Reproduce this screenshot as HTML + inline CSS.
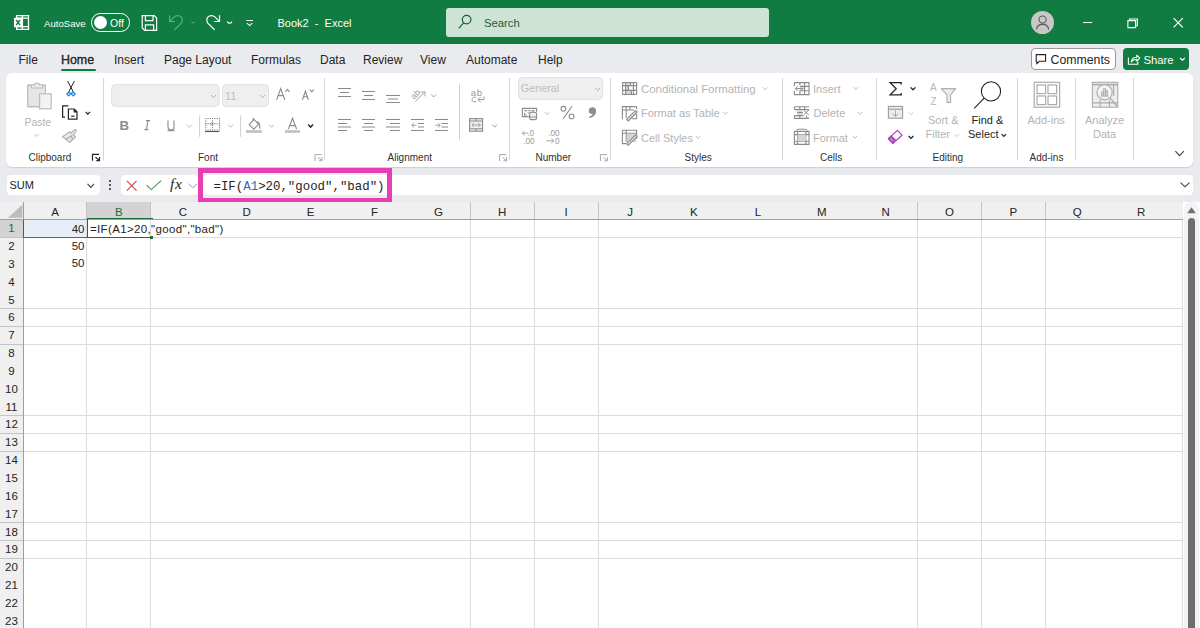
<!DOCTYPE html>
<html><head><meta charset="utf-8">
<style>
*{box-sizing:border-box;margin:0;padding:0}
html,body{width:1200px;height:628px;overflow:hidden;background:#fff;font-family:"Liberation Sans",sans-serif;color:#242424}
.a{position:absolute;white-space:pre}
svg{position:absolute;overflow:visible}
#title{position:absolute;left:0;top:0;width:1200px;height:44.5px;background:#107C41}
#tabs{position:absolute;left:0;top:44px;width:1200px;height:158px;background:#E9EBEE}
#rib{position:absolute;left:6px;top:73px;width:1187px;height:94px;background:#fff;border-radius:6px;box-shadow:0 1px 1px rgba(0,0,0,.12)}
.tab{position:absolute;top:53px;font-size:12px;line-height:14px;color:#242424}
.gl{position:absolute;font-size:10px;line-height:12px;color:#303030;top:152px}
.sep{position:absolute;top:78px;width:1px;height:82px;background:#D6D6D6}
.dis{color:#B3B3B3}
.hdr{font-size:11.5px;line-height:14px}
.cell{position:absolute;font-size:11.5px;line-height:14px;color:#242424}
.rt{position:absolute;font-size:11px;line-height:13px;margin-top:0.8px}
</style></head><body>
<div id="title"></div>
<div id="tabs"></div>

<!-- title bar content -->
<div class="a" style="left:44px;top:18px;font-size:9.6px;line-height:12px;color:#fff">AutoSave</div>
<div class="a" style="left:91px;top:13.2px;width:39px;height:18.6px;border:1.1px solid #fff;border-radius:9.3px"></div>
<div class="a" style="left:93.5px;top:16.3px;width:13px;height:13px;background:#fff;border-radius:50%"></div>
<div class="a" style="left:110px;top:17px;font-size:10.5px;line-height:12px;color:#fff">Off</div>
<div class="a" style="left:277.5px;top:17px;font-size:11px;line-height:13px;color:#fff">Book2  -  Excel</div>
<div class="a" style="left:446px;top:8px;width:323px;height:28.5px;background:#CDE3D6;border-radius:3px"></div>
<div class="a" style="left:484px;top:15.5px;font-size:11.3px;line-height:14px;color:#1B5E38">Search</div>
<div class="a" style="left:1031px;top:11px;width:23px;height:23px;background:#C8C8C8;border-radius:50%"></div>

<!-- tabs -->
<div class="tab" style="left:18.5px">File</div>
<div class="tab" style="left:61px;font-size:12.4px;-webkit-text-stroke:0.35px #242424">Home</div>
<div class="a" style="left:61px;top:68.5px;width:34.5px;height:2px;background:#107C41;border-radius:1px"></div>
<div class="tab" style="left:114px">Insert</div>
<div class="tab" style="left:164px">Page Layout</div>
<div class="tab" style="left:251px">Formulas</div>
<div class="tab" style="left:320px">Data</div>
<div class="tab" style="left:363px">Review</div>
<div class="tab" style="left:420px">View</div>
<div class="tab" style="left:466px">Automate</div>
<div class="tab" style="left:538px">Help</div>
<div class="a" style="left:1031px;top:48px;width:85px;height:22px;background:#fff;border:1px solid #9A9A9A;border-radius:4px"></div>
<div class="tab" style="left:1050.5px;font-size:12.3px">Comments</div>
<div class="a" style="left:1123px;top:48px;width:66px;height:22px;background:#107C41;border-radius:4px"></div>
<div class="tab" style="left:1143.5px;color:#fff;font-size:11.3px">Share</div>

<div id="rib"></div>
<!-- ribbon separators -->
<div class="sep" style="left:103px"></div>
<div class="sep" style="left:324px"></div>
<div class="sep" style="left:509px"></div>
<div class="sep" style="left:610px"></div>
<div class="sep" style="left:782px"></div>
<div class="sep" style="left:876px"></div>
<div class="sep" style="left:1017px"></div>
<div class="sep" style="left:1075px"></div>
<div class="sep" style="left:1133px"></div>
<!-- group labels -->
<div class="gl" style="left:28.5px">Clipboard</div>
<div class="gl" style="left:198px">Font</div>
<div class="gl" style="left:387.5px">Alignment</div>
<div class="gl" style="left:535.5px">Number</div>
<div class="gl" style="left:684.5px">Styles</div>
<div class="gl" style="left:820px">Cells</div>
<div class="gl" style="left:932.5px">Editing</div>
<div class="gl" style="left:1029.5px">Add-ins</div>



<!-- ribbon text -->
<div class="rt dis" style="left:24.5px;top:115px;font-size:10.4px">Paste</div>
<div class="rt dis" style="left:641px;top:82px;font-size:11.4px">Conditional Formatting</div>
<div class="rt dis" style="left:641px;top:106.5px">Format as Table</div>
<div class="rt dis" style="left:641px;top:131px">Cell Styles</div>
<div class="rt dis" style="left:813px;top:82px">Insert</div>
<div class="rt dis" style="left:813.5px;top:106.5px">Delete</div>
<div class="rt dis" style="left:813px;top:131px">Format</div>
<div class="rt dis" style="left:928px;top:113px">Sort &amp;</div>
<div class="rt dis" style="left:925.5px;top:127.5px">Filter</div>
<div class="rt" style="left:971.5px;top:113px">Find &amp;</div>
<div class="rt" style="left:968px;top:127.5px">Select</div>
<div class="rt dis" style="left:1027.5px;top:113px">Add-ins</div>
<div class="rt dis" style="left:1085px;top:113px">Analyze</div>
<div class="rt dis" style="left:1093px;top:127.5px">Data</div>
<svg style="left:0;top:0" width="1200" height="628" fill="none" stroke-linecap="butt">
<!-- ===== title bar icons ===== -->
<g stroke="#fff" stroke-width="1.2">
  <!-- excel icon -->
  <path d="M16.6 15.6 H28.5 V29.3 H16.6 Z M16.6 18.2 H28.5 M16.6 26.6 H28.5 M22.4 15.6 V29.3" stroke-width="1.3"/>
  <rect x="14" y="17.8" width="8.6" height="9.4" fill="#fff" stroke="none"/>
  <path d="M16.2 20 L20 25.2 M20 20 L16.2 25.2" stroke="#107C41" stroke-width="1.4"/>
  <!-- save -->
  <path d="M142.2 15.6 H154.2 L156.6 18 V30.4 H144.6 L142.2 28 Z"/>
  <path d="M145.4 15.6 V20.6 H153 V15.6 M145.4 30.4 V24.8 H153.6 V30.4"/>
  <!-- redo -->
  <path d="M219.5 15.2 V21.5 H214.2" />
  <path d="M218.8 20.8 L215.2 17.2 C213 15 209.6 15 207.8 17.2 C206.4 18.8 206.6 21.8 208 23.4 L214.6 29.8" />
  <path d="M227.2 21.6 C228.6 23.8 230.6 23.8 232 21.6" stroke-width="1.1"/>
  <!-- customize -->
  <path d="M246.3 20.5 H252.9 M246.9 23.2 L249.6 25.6 L252.3 23.2" stroke-width="1.1"/>
  <!-- window controls -->
  <path d="M1083.2 22.5 H1092.2" stroke-width="1.1"/>
  <path d="M1127.9 20.6 H1135.6 V27.6 H1127.9 Z M1129.6 20.6 V19 H1137.4 V25.8 H1135.6" stroke-width="1.1"/>
  <path d="M1173.6 18.2 L1182.8 27.4 M1182.8 18.2 L1173.6 27.4" stroke-width="1.2"/>
</g>
<g stroke="#5BAF7D" stroke-width="1.2">
  <!-- undo dim -->
  <path d="M169.6 15.2 V21.5 H174.9"/>
  <path d="M170.3 20.8 L173.9 17.2 C176.1 15 179.5 15 181.3 17.2 C182.7 18.8 182.5 21.8 181.1 23.4 L174.5 29.8"/>
  <path d="M191.2 21.8 C192.2 23.4 193.8 23.4 194.8 21.8" stroke-width="1"/>
</g>
<!-- search icon -->
<g stroke="#1B5E38" stroke-width="1.2">
  <circle cx="466.6" cy="19.6" r="4.3"/>
  <path d="M463.6 22.8 L458.8 28.4"/>
</g>
<!-- avatar person -->
<g stroke="#595959" stroke-width="1.1">
  <circle cx="1042.6" cy="19.6" r="3.6"/>
  <path d="M1036.6 29.6 C1036.8 25.6 1039 24.4 1042.6 24.4 C1046.2 24.4 1048.4 25.6 1048.6 29.6"/>
</g>
<!-- comments icon -->
<path d="M1036.2 54.6 H1045.6 V61.2 H1039.4 L1036.8 63.8 V61.2 H1036.2 Z" stroke="#242424" stroke-width="1.1" stroke-linejoin="round"/>
<!-- share icon -->
<g stroke="#fff" stroke-width="1.1">
  <path d="M1128.4 57.4 V64.2 H1137.8 V61.4"/>
  <path d="M1131.2 62 C1131.6 58.8 1133.8 57.2 1136.8 57.2 V55.2 L1139.8 58.2 L1136.8 61.2 V59.4 C1135 59.4 1132.8 60 1131.2 62 Z" stroke-linejoin="round"/>
  <path d="M1180 58 L1182.4 60.2 L1184.8 58"/>
</g>

<!-- ===== Clipboard ===== -->
<g stroke="#BDBDBD" stroke-width="1.2">
  <path d="M31 85.4 H27.8 V106.6 H39.2" fill="#E8E8E8"/>
  <path d="M27.8 85.4 H31 M42.8 85.4 H45.4 V93.3" />
  <rect x="27.8" y="85.4" width="17.6" height="21.2" fill="#E6E6E6" stroke="none"/>
  <path d="M45.4 93.3 V85.4 H42.4 M31.2 85.4 H27.8 V106.6 H39.2"/>
  <path d="M31.4 88 V84.8 H34.4 C34.6 82.6 39.4 82.6 39.6 84.8 H42.6 V88 Z" fill="#ECECEC"/>
  <rect x="39.6" y="93.8" width="11.6" height="15" fill="#F2F2F2"/>
</g>
<path d="M34.6 134.2 L36.8 136.4 L39 134.2" stroke="#BDBDBD" stroke-width="1"/>
<!-- scissors -->
<g stroke="#242424" stroke-width="1">
  <path d="M67.6 81 L72.8 91 M74.4 81 L69.2 91"/>
</g>
<g stroke="#2B88D8" stroke-width="1.2">
  <path d="M69 91.4 L66.8 94 L68.6 96 L70.8 94 Z" fill="#BFE0F5"/>
  <path d="M73 91.4 L75.2 94 L73.4 96 L71.2 94 Z" fill="#BFE0F5"/>
</g>
<!-- copy -->
<g stroke="#242424" stroke-width="1.2">
  <path d="M68.4 105.8 H62.6 V117.2 H65"/>
  <path d="M68.4 109 V119.2 H77 V111.8 L74.2 109 Z M74.2 109 V111.8 H77"/>
  <path d="M71.2 116.2 H74.6"/>
  <path d="M85.6 111.9 L87.8 114.1 L90 111.9" stroke-width="1.3"/>
</g>
<!-- format painter -->
<g stroke="#A8A8A8" stroke-width="1.1" stroke-linejoin="round">
  <path d="M62.6 136.6 L69.8 131.6 L75.6 136.8 L69.6 142.4 Z" fill="#E8E8E8"/>
  <path d="M65.6 139.6 L71.6 135.8 L72.4 140.2" fill="none"/>
  <path d="M71.2 133 L74.6 129.8 C75.4 129.2 76.6 130.2 76.2 131 L73.6 135" fill="#F2F2F2"/>
</g>

<!-- ===== Font ===== -->
<rect x="111.6" y="84.6" width="107.6" height="21.8" rx="4" fill="#EFEFEF" stroke="#E0E0E0" stroke-width="1"/>
<rect x="222.5" y="84.6" width="46" height="21.8" rx="4" fill="#EFEFEF" stroke="#E0E0E0" stroke-width="1"/>
<g stroke="#B5B5B5" stroke-width="1">
  <path d="M211 95 L213.5 97.6 L216 95"/>
  <path d="M260.2 95 L262.7 97.6 L265.2 95"/>
</g>
<text x="225" y="99.8" font-family="Liberation Sans" font-size="11" fill="#BDBDBD" stroke="none">11</text>
<g stroke="#8A8A8A" stroke-width="1.1">
  <path d="M276.6 99.8 L280.7 88.6 L284.8 99.8 M278.2 95.6 H283.2"/>
  <path d="M285.4 91.8 L287.5 89.4 L289.6 91.8"/>
  <path d="M302.4 99.8 L305.4 91.2 L308.4 99.8 M303.6 96.8 H307.2"/>
  <path d="M309.8 89.6 L311.9 91.8 L314 89.6"/>
</g>
<text x="119.6" y="129.8" font-family="Liberation Sans" font-weight="bold" font-size="13.2" fill="#8C8C8C" stroke="none">B</text>
<g stroke="#8C8C8C" stroke-width="1.1">
  <path d="M146 120.6 H150.2 M144.4 129.6 H148.4 M148 120.6 L146.4 129.6"/>
  <path d="M168 120.4 V127 C168 131 174 131 174 127 V120.4 M167.4 130.8 H174.8"/>
</g>
<g stroke="#BDBDBD" stroke-width="1">
  <path d="M186.8 124.6 L189.4 127.4 L192 124.6"/>
  <path d="M228.2 124.6 L230.6 127.4 L233 124.6"/>
  <path d="M269.2 124.6 L271.6 127.4 L274 124.6"/>
</g>
<path d="M199.6 115.4 V136.8 M240.6 115.4 V136.8" stroke="#D0D0D0" stroke-width="1"/>
<!-- borders -->
<g fill="#7A7A7A" stroke="none"><rect x="205.2" y="118.0" width="1.1" height="1.1"/><rect x="205.2" y="120.3" width="1.1" height="1.1"/><rect x="205.2" y="122.6" width="1.1" height="1.1"/><rect x="205.2" y="124.9" width="1.1" height="1.1"/><rect x="205.2" y="127.2" width="1.1" height="1.1"/><rect x="205.2" y="129.5" width="1.1" height="1.1"/><rect x="207.5" y="118.0" width="1.1" height="1.1"/><rect x="207.5" y="129.5" width="1.1" height="1.1"/><rect x="209.8" y="118.0" width="1.1" height="1.1"/><rect x="209.8" y="129.5" width="1.1" height="1.1"/><rect x="212.1" y="118.0" width="1.1" height="1.1"/><rect x="212.1" y="120.3" width="1.1" height="1.1"/><rect x="212.1" y="122.6" width="1.1" height="1.1"/><rect x="212.1" y="124.9" width="1.1" height="1.1"/><rect x="212.1" y="127.2" width="1.1" height="1.1"/><rect x="212.1" y="129.5" width="1.1" height="1.1"/><rect x="214.4" y="118.0" width="1.1" height="1.1"/><rect x="214.4" y="129.5" width="1.1" height="1.1"/><rect x="216.7" y="118.0" width="1.1" height="1.1"/><rect x="216.7" y="129.5" width="1.1" height="1.1"/><rect x="219.0" y="118.0" width="1.1" height="1.1"/><rect x="219.0" y="120.3" width="1.1" height="1.1"/><rect x="219.0" y="122.6" width="1.1" height="1.1"/><rect x="219.0" y="124.9" width="1.1" height="1.1"/><rect x="219.0" y="127.2" width="1.1" height="1.1"/><rect x="219.0" y="129.5" width="1.1" height="1.1"/><rect x="205.2" y="123.2" width="1.1" height="1.1"/><rect x="207.5" y="123.2" width="1.1" height="1.1"/><rect x="209.8" y="123.2" width="1.1" height="1.1"/><rect x="212.1" y="123.2" width="1.1" height="1.1"/><rect x="214.4" y="123.2" width="1.1" height="1.1"/><rect x="216.7" y="123.2" width="1.1" height="1.1"/><rect x="219.0" y="123.2" width="1.1" height="1.1"/></g>
<path d="M211.8 122.4 L213 123.75 L211.8 125.1 L210.6 123.75 Z" stroke="#7A7A7A" stroke-width="0.8"/>
<path d="M205 131.5 H219.2" stroke="#5A5A5A" stroke-width="1.2"/>
<!-- fill color -->
<g stroke="#8A8A8A" stroke-width="1.1" stroke-linejoin="round">
  <path d="M249.2 124.6 L254 119.4 L258.6 124.2 L253.8 129.2 Z"/>
  <path d="M253.2 120.2 V117.8 M256.6 122.2 C258.6 121.6 260.2 123.4 259.8 128.8"/>
</g>
<rect x="246" y="130.2" width="16" height="2.6" fill="#C0C0C0"/>
<path d="M288.4 129 L292.5 118.2 L296.6 129 M289.8 125.6 H295.2" stroke="#8A8A8A" stroke-width="1.1"/>
<rect x="285" y="130.2" width="15" height="2.6" fill="#C0C0C0"/>
<path d="M308.2 124.6 L310.6 127.2 L313 124.6" stroke="#242424" stroke-width="1.5"/>
<!-- launchers -->
<g stroke="#A8A8A8" stroke-width="1">
<path d="M321.6 154.6 H315.0 V161.0 M318.0 157.4 L322.0 160.6 M322.0 157.2 V160.8 H318.8"/>
<path d="M506.2 154.6 H499.6 V161.0 M502.6 157.4 L506.6 160.6 M506.6 157.2 V160.8 H503.4"/>
<path d="M607.0 154.6 H600.4 V161.0 M603.4 157.4 L607.4 160.6 M607.4 157.2 V160.8 H604.2"/>
</g>
<g stroke="#242424" stroke-width="1.2">
<path d="M99.1 154.4 H92.5 V160.8 M95.5 157.2 L99.5 160.4 M99.5 157.0 V160.6 H96.3"/>
</g>

<!-- ===== Alignment ===== -->
<g stroke="#8A8A8A" stroke-width="1.2">
  <path d="M338 88.5 H351 M340 92.5 H349 M338 96.5 H351"/>
  <path d="M362 91.5 H375 M364 95.5 H373 M362 99.5 H375"/>
  <path d="M386 95.5 H400 M388 99 H398 M386 102.5 H400"/>
  <path d="M338 119.5 H351 M338 123.5 H347 M338 127 H351 M338 130.5 H347"/>
  <path d="M362 119.5 H375 M364 123.5 H373 M362 127 H375 M364 130.5 H373"/>
  <path d="M386 119.5 H400 M390 123.5 H400 M386 127 H400 M390 130.5 H400"/>
  <path d="M411 119.5 H424 M418 123.5 H424 M418 127 H424 M411 130.5 H424"/>
  <path d="M435 119.5 H448 M441.4 123.5 H448 M441.4 127 H448 M435 130.5 H448"/>
</g>
<g stroke="#A0A0A0" stroke-width="1">
  <path d="M416.4 125.3 H411.8 M413.8 123.2 L411.7 125.3 L413.8 127.4"/>
  <path d="M435.2 125.3 H440.2 M438.2 123.2 L440.3 125.3 L438.2 127.4"/>
</g>
<g stroke="#A0A0A0" stroke-width="1">
  <path d="M415.4 101.4 L425 91.8 M420.6 92 H425 V96.4"/>
  <path d="M431.2 94.4 L433.6 97 L436 94.4"/>
  <path d="M492.4 124.6 L494.7 127.2 L497 124.6"/>
</g>
<text transform="translate(414,100) rotate(-45)" font-family="Liberation Sans" font-size="9" fill="#A0A0A0" stroke="none">ab</text>
<path d="M459.5 84.4 V139.6" stroke="#D0D0D0" stroke-width="1"/>
<text x="470.8" y="95.6" font-family="Liberation Sans" font-size="9.6" fill="#9A9A9A" stroke="none" textLength="11.4">ab</text>
<g stroke="#9A9A9A" stroke-width="1">
  <path d="M476.4 97.8 C475 96.8 472.2 97 472 99.6 C471.8 101.8 474.8 102.4 476.4 101.4"/>
  <path d="M480.6 97 L478 99.6 L480.6 102.2 M484 96.4 V99.6 H478.4"/>
</g>
<g stroke="#8C8C8C" stroke-width="1.1">
  <rect x="469.6" y="118.6" width="13" height="12.6" fill="#EDEDED"/>
  <path d="M469.6 121 H482.6 M469.6 128.8 H482.6 M476.1 118.6 V121 M476.1 128.8 V131.2"/>
  <path d="M472 125 H480.4 M473.8 123.2 L472 125 L473.8 126.8 M478.6 123.2 L480.4 125 L478.6 126.8" stroke="#A0A0A0" stroke-width="1"/>
</g>

<!-- ===== Number ===== -->
<rect x="518.6" y="77.6" width="84" height="21.8" rx="4" fill="#EFEFEF" stroke="#E0E0E0" stroke-width="1"/>
<text x="520.8" y="92" font-family="Liberation Sans" font-size="10.8" fill="#BDBDBD" stroke="none">General</text>
<path d="M595.4 88 L597.7 90.4 L600 88" stroke="#B5B5B5" stroke-width="1"/>
<g stroke="#8C8C8C" stroke-width="1.1">
  <path d="M528.8 116.6 H522.4 V108.4 H536.6 V112"/>
  <path d="M524.4 110.6 H527 M528.4 110.6 H530.4 M531.6 110.6 H534.4 M524.6 113 V115 H526.6 M527.6 113 H529"/>
  <path d="M529.6 113.6 C529.6 111.6 536.6 111.6 536.6 113.6 V118.4 C536.6 120 529.6 120 529.6 118.4 Z M529.6 116 C529.6 117.4 536.6 117.4 536.6 116" fill="#F2F2F2"/>
  <path d="M545 112.2 L547.1 114.6 L549.2 112.2" stroke="#BDBDBD" stroke-width="0.9"/>
</g>
<g stroke="#8C8C8C" stroke-width="1.1">
  <circle cx="563.4" cy="108.8" r="2.4"/>
  <circle cx="571.6" cy="116.4" r="2.4"/>
  <path d="M572 106.2 L563.2 118.8"/>
</g>
<path d="M591.6 107.4 C595 107 596.6 109.4 596 112.4 C595.4 115.4 592.6 117.4 589.2 118 L589 117 C591 116.2 592.4 115.2 592.8 113.8 C590.6 114.2 588.8 113 588.8 111 C588.8 108.8 590 107.6 591.6 107.4 Z" fill="#8C8C8C"/>
<g font-family="Liberation Sans" font-size="8.2" fill="#9A9A9A" stroke="none">
  <text x="527.2" y="136">.0</text>
  <text x="523.2" y="143.9">.00</text>
  <text x="548.2" y="136">.00</text>
  <text x="555" y="143.9">0</text>
</g>
<g stroke="#9A9A9A" stroke-width="0.9">
  <path d="M528.2 133.2 H522.2 M524.6 131 L522.2 133.2 L524.6 135.4"/>
  <path d="M546.2 140.8 H553.8 M551.4 138.6 L553.8 140.8 L551.4 143"/>
</g>

<!-- ===== Styles ===== -->
<g stroke="#8A8A8A" stroke-width="1.1">
  <rect x="626" y="82.6" width="4.6" height="2.6" fill="#D8D8D8" stroke="none"/>
  <rect x="626" y="86" width="2.4" height="4" fill="#D8D8D8" stroke="none"/>
  <rect x="626" y="91" width="5.2" height="3.2" fill="#D8D8D8" stroke="none"/>
  <rect x="622.6" y="82.6" width="14" height="11.8"/>
  <path d="M622.6 85.6 H636.6 M622.6 90.4 H636.6 M625.6 82.6 V94.4 M633.4 82.6 V94.4 M630.6 82.6 V85.6 M628.5 85.6 V90.4 M631.4 90.4 V94.4"/>
</g>
<g stroke="#8C8C8C" stroke-width="1.1">
  <path d="M622.4 119.2 V106.6 H636.6 V109 M622.4 110 H634 M626.2 106.6 V118 M630 106.6 V110"/>
  <path d="M636.6 114 V118.8 H632"/>
  <path d="M626.6 119.4 L635.6 110.4 L637.2 112 L628.2 121 Z" fill="#E6E6E6" stroke-linejoin="round"/>
  <path d="M622.4 130.2 V143.6 H626 M622.4 130.2 H636.6 V139 M622.4 133.2 H636.6 M626.2 130.2 V142"/>
  <rect x="626.8" y="133.8" width="9.4" height="8.4" fill="#D4D4D4" stroke="none"/>
  <path d="M626.6 143.8 L635.6 134.8 L637.2 136.4 L628.2 145.4 Z" fill="#E6E6E6" stroke-linejoin="round"/>
</g>
<g stroke="#BDBDBD" stroke-width="1">
  <path d="M763 87.4 L765.2 89.8 L767.4 87.4"/>
  <path d="M723.2 112 L725.4 114.4 L727.6 112"/>
  <path d="M695.8 136 L698 138.4 L700.2 136"/>
</g>

<!-- ===== Cells ===== -->
<g stroke="#8A8A8A" stroke-width="1.1">
  <rect x="800" y="86.4" width="4.6" height="4.4" fill="#D6D6D6" stroke="none"/>
  <path d="M794.4 82.6 H809 V94.6 H794.4 V90.8 M794.4 86.2 V82.6 M799.9 90.8 H809 M799.9 86.4 H809 M799.9 90.8 V94.6 M804.6 82.6 V94.6 M799.9 82.6 V85"/>
  <path d="M803.2 88.6 H795.4 M797.8 86.2 L795.4 88.6 L797.8 91" stroke-width="1"/>
  <path d="M794.4 106.8 H809 M794.4 118.4 H809 M794.4 106.8 V109.6 M794.4 115.6 V118.4 M794.4 109.6 H809 M794.4 115.6 H803.4 M799.8 106.8 V109.6 M799.8 115.6 V118.4 M806.6 115.6 V118.4 M804.6 106.8 V109.6"/>
  <rect x="797" y="110.6" width="5.6" height="4.2" fill="#D6D6D6" stroke="none"/>
  <path d="M797.2 112.6 H803" stroke-width="1"/>
  <path d="M803.8 110.2 L808.8 115 M808.8 110.2 L803.8 115" stroke-width="1"/>
  <path d="M794.4 131.4 H809 V144.4 H794.4 Z M794.4 134.6 H809 M794.4 141.2 H809 M797.6 131.4 V144.4 M805.8 131.4 V144.4"/>
  <rect x="797.6" y="134.6" width="8.2" height="6.6" fill="#D6D6D6" stroke="none"/>
  <path d="M796 130.2 C796 128.8 807.4 128.8 807.4 130.2" stroke-width="1"/>
</g>
<g stroke="#BDBDBD" stroke-width="1">
  <path d="M853.6 87.2 L855.8 89.6 L858 87.2"/>
  <path d="M857.8 112 L860 114.4 L862.2 112"/>
  <path d="M852.8 135.8 L855 138.2 L857.2 135.8"/>
</g>

<!-- ===== Editing ===== -->
<path d="M901.2 84.4 V82.6 H890.2 L896.2 88.8 L890.2 94.8 H901.2 V93" stroke="#242424" stroke-width="1.3"/>
<path d="M910.6 87.4 L913 89.8 L915.4 87.4" stroke="#242424" stroke-width="1.3"/>
<g stroke="#9C9C9C" stroke-width="1.1">
  <rect x="888.4" y="106.4" width="14.2" height="11.8" fill="#EBEBEB"/>
  <path d="M888.4 109.2 H902.6"/>
  <path d="M895.5 110.4 V116.4 M892.6 113.6 L895.5 116.4 L898.4 113.6" stroke="#A0A0A0" stroke-width="0.9"/>
</g>
<path d="M908.8 112.2 L911 114.6 L913.2 112.2" stroke="#C8C8C8" stroke-width="1"/>
<g stroke="#A23EB6" stroke-width="1.2" stroke-linejoin="round">
  <path d="M888.4 138.6 L891.1 136.1 L894.4 139.8 L893 143.4 Z" fill="#C97FD6"/>
  <path d="M888.4 138.6 L897.4 130.4 L902 135.2 L893 143.4 Z"/>
  <path d="M891.1 136.1 L895.7 140.2"/>
</g>
<path d="M908.6 136 L911 138.4 L913.4 136" stroke="#242424" stroke-width="1.3"/>
<!-- sort & filter -->
<g font-family="Liberation Sans" font-size="10" fill="#B5B5B5" stroke="none">
  <text x="930" y="91">A</text>
  <text x="930.6" y="104.8">Z</text>
</g>
<path d="M941.2 88.6 H955.6 L950.6 94.8 V102.4 H947 V94.8 Z" stroke="#B0B0B0" stroke-width="1.1" fill="#EBEBEB" stroke-linejoin="round"/>
<path d="M954.6 134.4 L956.8 136.6 L959 134.4" stroke="#C8C8C8" stroke-width="1"/>
<!-- find -->
<circle cx="991" cy="91.4" r="9.6" stroke="#242424" stroke-width="1.1"/>
<path d="M984.2 98.2 L974.2 108.4" stroke="#242424" stroke-width="1.1"/>
<path d="M1001.6 134.2 L1003.8 136.4 L1006 134.2" stroke="#242424" stroke-width="1.2"/>

<!-- ===== Add-ins ===== -->
<g stroke="#ABABAB" stroke-width="1.2">
  <rect x="1034.2" y="82.3" width="25.4" height="24.9"/>
  <rect x="1037" y="85" width="8.6" height="8.6"/>
  <rect x="1048" y="85" width="8.6" height="8.6"/>
  <rect x="1037" y="96" width="8.6" height="8.6"/>
  <rect x="1048" y="96" width="8.6" height="8.6"/>
</g>
<g stroke="#ABABAB" stroke-width="1.1">
  <rect x="1092.4" y="82.3" width="25.4" height="24.9" fill="#EDEDED"/>
  <path d="M1092.4 84.6 H1117.8" stroke-width="1.6"/>
  <path d="M1092.4 102.9 H1117.8 M1100.2 100 V107.2 M1109.4 100 V107.2 M1113.6 84.6 V96"/>
  <circle cx="1104.6" cy="92.2" r="7.6" fill="#F4F4F4" stroke-width="1.2"/>
  <path d="M1109.8 97.6 L1117.6 106.8" stroke-width="1.4"/>
  <path d="M1101.6 96 V92 H1103.6 V96 M1103.6 96 V88.6 H1105.6 V96 M1105.6 96 V90.6 H1107.6 V96 M1100.6 96.2 H1108.6" stroke-width="0.9" fill="#D8D8D8"/>
</g>
<path d="M1175.4 151.2 L1179.6 155.6 L1183.8 151.2" stroke="#424242" stroke-width="1.2"/>
</svg>

<!-- formula bar -->
<div class="a" style="left:6.5px;top:175px;width:93.5px;height:20px;background:#fff;border-radius:4px"></div>
<div class="a" style="left:9.5px;top:178.5px;font-size:11px;line-height:13px;color:#242424">SUM</div>
<svg style="left:87px;top:182.5px" width="8" height="6"><path d="M0.5 0.8 L3.8 4.4 L7.1 0.8" fill="none" stroke="#424242" stroke-width="1.1"/></svg>
<div class="a" style="left:109px;top:179.6px;width:2px;height:2px;background:#242424;border-radius:1px"></div>
<div class="a" style="left:109px;top:184px;width:2px;height:2px;background:#242424;border-radius:1px"></div>
<div class="a" style="left:109px;top:188.4px;width:2px;height:2px;background:#242424;border-radius:1px"></div>
<div class="a" style="left:120.5px;top:175px;width:77.5px;height:20px;background:#fff;border-radius:4px"></div>
<svg style="left:126px;top:179.5px" width="12" height="12"><path d="M0.8 0.8 L10.6 10.6 M10.6 0.8 L0.8 10.6" stroke="#CC4E4E" stroke-width="1.2" fill="none"/></svg>
<svg style="left:146px;top:180px" width="16" height="11"><path d="M0.6 5.2 L5.2 9.6 L15.2 0.6" stroke="#46975F" stroke-width="1.1" fill="none"/></svg>
<div class="a" style="left:170px;top:175px;font-family:'Liberation Serif',serif;font-style:italic;font-size:15.5px;line-height:17px;color:#242424;letter-spacing:0.6px">fx</div>
<svg style="left:188px;top:183px" width="10" height="6"><path d="M0.5 0.8 L4.8 4.6 L9.1 0.8" fill="none" stroke="#A0A0A0" stroke-width="1"/></svg>
<div class="a" style="left:203px;top:175px;width:989.5px;height:20px;background:#fff;border-radius:4px"></div>
<svg style="left:1179.5px;top:182px" width="10" height="6"><path d="M0.5 0.6 L5 4.8 L9.5 0.6" fill="none" stroke="#424242" stroke-width="1.1"/></svg>
<div class="a" style="left:213.5px;top:180px;font-family:'Liberation Mono',monospace;font-size:12.4px;line-height:14px;color:#242424">=IF(<span style="color:#2A70B8">A1</span>&gt;20,"good","bad")</div>
<div class="a" style="left:198.4px;top:168px;width:193.2px;height:35.4px;border:5.1px solid #E83EB4"></div>

<!-- grid -->
<div class="a" style="left:0;top:202px;width:1183px;height:18px;background:#F0F0F0"></div>
<div class="a" style="left:0;top:219px;width:23.5px;height:409px;background:#F0F0F0"></div>
<div class="a" style="left:86.99px;top:202px;width:63.89px;height:18px;background:#D3D3D3"></div>
<div class="a" style="left:0;top:219.20px;width:23.5px;height:17.85px;background:#D3D3D3"></div>
<div class="a" style="left:23.5px;top:219.20px;width:63.89px;height:17.85px;background:#E7EEF8"></div>
<div class="a" style="left:86.49px;top:220px;width:1px;height:408px;background:#DCDCDC"></div>
<div class="a" style="left:86.49px;top:202px;width:1px;height:18px;background:#C4C4C4"></div>
<div class="a" style="left:150.38px;top:220px;width:1px;height:408px;background:#DCDCDC"></div>
<div class="a" style="left:150.38px;top:202px;width:1px;height:18px;background:#C4C4C4"></div>
<div class="a" style="left:469.83px;top:220px;width:1px;height:408px;background:#DCDCDC"></div>
<div class="a" style="left:469.83px;top:202px;width:1px;height:18px;background:#C4C4C4"></div>
<div class="a" style="left:533.72px;top:220px;width:1px;height:408px;background:#DCDCDC"></div>
<div class="a" style="left:533.72px;top:202px;width:1px;height:18px;background:#C4C4C4"></div>
<div class="a" style="left:597.61px;top:220px;width:1px;height:408px;background:#DCDCDC"></div>
<div class="a" style="left:597.61px;top:202px;width:1px;height:18px;background:#C4C4C4"></div>
<div class="a" style="left:917.06px;top:220px;width:1px;height:408px;background:#DCDCDC"></div>
<div class="a" style="left:917.06px;top:202px;width:1px;height:18px;background:#C4C4C4"></div>
<div class="a" style="left:980.95px;top:220px;width:1px;height:408px;background:#DCDCDC"></div>
<div class="a" style="left:980.95px;top:202px;width:1px;height:18px;background:#C4C4C4"></div>
<div class="a" style="left:1044.84px;top:220px;width:1px;height:408px;background:#DCDCDC"></div>
<div class="a" style="left:1044.84px;top:202px;width:1px;height:18px;background:#C4C4C4"></div>
<div class="a" style="left:23.5px;top:236.55px;width:1159px;height:1px;background:#DCDCDC"></div>
<div class="a" style="left:0;top:236.55px;width:23.5px;height:1px;background:#C4C4C4"></div>
<div class="a" style="left:23.5px;top:307.95px;width:1159px;height:1px;background:#DCDCDC"></div>
<div class="a" style="left:0;top:307.95px;width:23.5px;height:1px;background:#C4C4C4"></div>
<div class="a" style="left:23.5px;top:325.80px;width:1159px;height:1px;background:#DCDCDC"></div>
<div class="a" style="left:0;top:325.80px;width:23.5px;height:1px;background:#C4C4C4"></div>
<div class="a" style="left:23.5px;top:343.65px;width:1159px;height:1px;background:#DCDCDC"></div>
<div class="a" style="left:0;top:343.65px;width:23.5px;height:1px;background:#C4C4C4"></div>
<div class="a" style="left:23.5px;top:415.05px;width:1159px;height:1px;background:#DCDCDC"></div>
<div class="a" style="left:0;top:415.05px;width:23.5px;height:1px;background:#C4C4C4"></div>
<div class="a" style="left:23.5px;top:432.90px;width:1159px;height:1px;background:#DCDCDC"></div>
<div class="a" style="left:0;top:432.90px;width:23.5px;height:1px;background:#C4C4C4"></div>
<div class="a" style="left:23.5px;top:450.75px;width:1159px;height:1px;background:#DCDCDC"></div>
<div class="a" style="left:0;top:450.75px;width:23.5px;height:1px;background:#C4C4C4"></div>
<div class="a" style="left:23.5px;top:522.15px;width:1159px;height:1px;background:#DCDCDC"></div>
<div class="a" style="left:0;top:522.15px;width:23.5px;height:1px;background:#C4C4C4"></div>
<div class="a" style="left:23.5px;top:540.00px;width:1159px;height:1px;background:#DCDCDC"></div>
<div class="a" style="left:0;top:540.00px;width:23.5px;height:1px;background:#C4C4C4"></div>
<div class="a" style="left:23.5px;top:557.85px;width:1159px;height:1px;background:#DCDCDC"></div>
<div class="a" style="left:0;top:557.85px;width:23.5px;height:1px;background:#C4C4C4"></div>
<div class="a" style="left:0;top:218.7px;width:1183px;height:1.3px;background:#9E9E9E"></div>
<div class="a" style="left:23px;top:202px;width:1.2px;height:426px;background:#9E9E9E"></div>
<svg style="left:0;top:202px" width="24" height="18"><path d="M22.4 2.6 L22.4 15.8 L8 15.8 Z" fill="#BDBDBD"/></svg>
<div class="a hdr" style="left:35.05px;width:40px;text-align:center;top:205px;color:#242424">A</div>
<div class="a hdr" style="left:98.94px;width:40px;text-align:center;top:205px;color:#1E6B3C">B</div>
<div class="a hdr" style="left:162.82px;width:40px;text-align:center;top:205px;color:#242424">C</div>
<div class="a hdr" style="left:226.72px;width:40px;text-align:center;top:205px;color:#242424">D</div>
<div class="a hdr" style="left:290.61px;width:40px;text-align:center;top:205px;color:#242424">E</div>
<div class="a hdr" style="left:354.50px;width:40px;text-align:center;top:205px;color:#242424">F</div>
<div class="a hdr" style="left:418.39px;width:40px;text-align:center;top:205px;color:#242424">G</div>
<div class="a hdr" style="left:482.28px;width:40px;text-align:center;top:205px;color:#242424">H</div>
<div class="a hdr" style="left:546.17px;width:40px;text-align:center;top:205px;color:#242424">I</div>
<div class="a hdr" style="left:610.06px;width:40px;text-align:center;top:205px;color:#242424">J</div>
<div class="a hdr" style="left:673.95px;width:40px;text-align:center;top:205px;color:#242424">K</div>
<div class="a hdr" style="left:737.84px;width:40px;text-align:center;top:205px;color:#242424">L</div>
<div class="a hdr" style="left:801.73px;width:40px;text-align:center;top:205px;color:#242424">M</div>
<div class="a hdr" style="left:865.62px;width:40px;text-align:center;top:205px;color:#242424">N</div>
<div class="a hdr" style="left:929.50px;width:40px;text-align:center;top:205px;color:#242424">O</div>
<div class="a hdr" style="left:993.39px;width:40px;text-align:center;top:205px;color:#242424">P</div>
<div class="a hdr" style="left:1057.28px;width:40px;text-align:center;top:205px;color:#242424">Q</div>
<div class="a hdr" style="left:1121.17px;width:40px;text-align:center;top:205px;color:#242424">R</div>
<div class="a hdr" style="left:0;width:23px;text-align:center;top:221.12px;color:#1E6B3C">1</div>
<div class="a hdr" style="left:0;width:23px;text-align:center;top:238.97px;color:#242424">2</div>
<div class="a hdr" style="left:0;width:23px;text-align:center;top:256.82px;color:#242424">3</div>
<div class="a hdr" style="left:0;width:23px;text-align:center;top:274.68px;color:#242424">4</div>
<div class="a hdr" style="left:0;width:23px;text-align:center;top:292.52px;color:#242424">5</div>
<div class="a hdr" style="left:0;width:23px;text-align:center;top:310.38px;color:#242424">6</div>
<div class="a hdr" style="left:0;width:23px;text-align:center;top:328.23px;color:#242424">7</div>
<div class="a hdr" style="left:0;width:23px;text-align:center;top:346.07px;color:#242424">8</div>
<div class="a hdr" style="left:0;width:23px;text-align:center;top:363.93px;color:#242424">9</div>
<div class="a hdr" style="left:0;width:23px;text-align:center;top:381.77px;color:#242424">10</div>
<div class="a hdr" style="left:0;width:23px;text-align:center;top:399.62px;color:#242424">11</div>
<div class="a hdr" style="left:0;width:23px;text-align:center;top:417.48px;color:#242424">12</div>
<div class="a hdr" style="left:0;width:23px;text-align:center;top:435.33px;color:#242424">13</div>
<div class="a hdr" style="left:0;width:23px;text-align:center;top:453.18px;color:#242424">14</div>
<div class="a hdr" style="left:0;width:23px;text-align:center;top:471.03px;color:#242424">15</div>
<div class="a hdr" style="left:0;width:23px;text-align:center;top:488.88px;color:#242424">16</div>
<div class="a hdr" style="left:0;width:23px;text-align:center;top:506.73px;color:#242424">17</div>
<div class="a hdr" style="left:0;width:23px;text-align:center;top:524.58px;color:#242424">18</div>
<div class="a hdr" style="left:0;width:23px;text-align:center;top:542.42px;color:#242424">19</div>
<div class="a hdr" style="left:0;width:23px;text-align:center;top:560.28px;color:#242424">20</div>
<div class="a hdr" style="left:0;width:23px;text-align:center;top:578.12px;color:#242424">21</div>
<div class="a hdr" style="left:0;width:23px;text-align:center;top:595.98px;color:#242424">22</div>
<div class="a hdr" style="left:0;width:23px;text-align:center;top:613.83px;color:#242424">23</div>

<!-- cells -->
<div class="a cell" style="left:40px;width:44.5px;text-align:right;top:222px">40</div>
<div class="a cell" style="left:40px;width:44.5px;text-align:right;top:238.6px">50</div>
<div class="a cell" style="left:40px;width:44.5px;text-align:right;top:256.2px">50</div>
<div class="a" style="left:23.5px;top:236.5px;width:64px;height:1.3px;background:#3B69B0"></div>
<div class="a" style="left:23.2px;top:219.5px;width:1px;height:18px;background:#2F6B52"></div>
<div class="a" style="left:86.5px;top:218.2px;width:66.2px;height:19.9px;border:1.7px solid #1E6B3C;border-right:none"></div>
<div class="a" style="left:149.5px;top:236.3px;width:3.4px;height:2.6px;background:#1E6B3C"></div>
<div class="a" style="left:151px;top:219.8px;width:76px;height:16.6px;background:#fff"></div>
<div class="a cell" style="left:90px;top:222px;letter-spacing:0.35px;background:transparent">=IF(A1&gt;20,"good","bad")</div>

<!-- scrollbar -->
<div class="a" style="left:1183.5px;top:202px;width:15.5px;height:426px;background:#F3F3F3;border-radius:7px 7px 0 0"></div>
<svg style="left:1187px;top:206.5px" width="9" height="7"><path d="M4.5 0.3 L8.8 6.2 L0.2 6.2 Z" fill="#707070"/></svg>
<div class="a" style="left:1181.6px;top:220px;width:1px;height:408px;background:#DCDCDC"></div>
<div class="a" style="left:1188px;top:218px;width:7.2px;height:410px;background:#6E6E6E;border-radius:3.6px 3.6px 0 0"></div>

</body></html>
